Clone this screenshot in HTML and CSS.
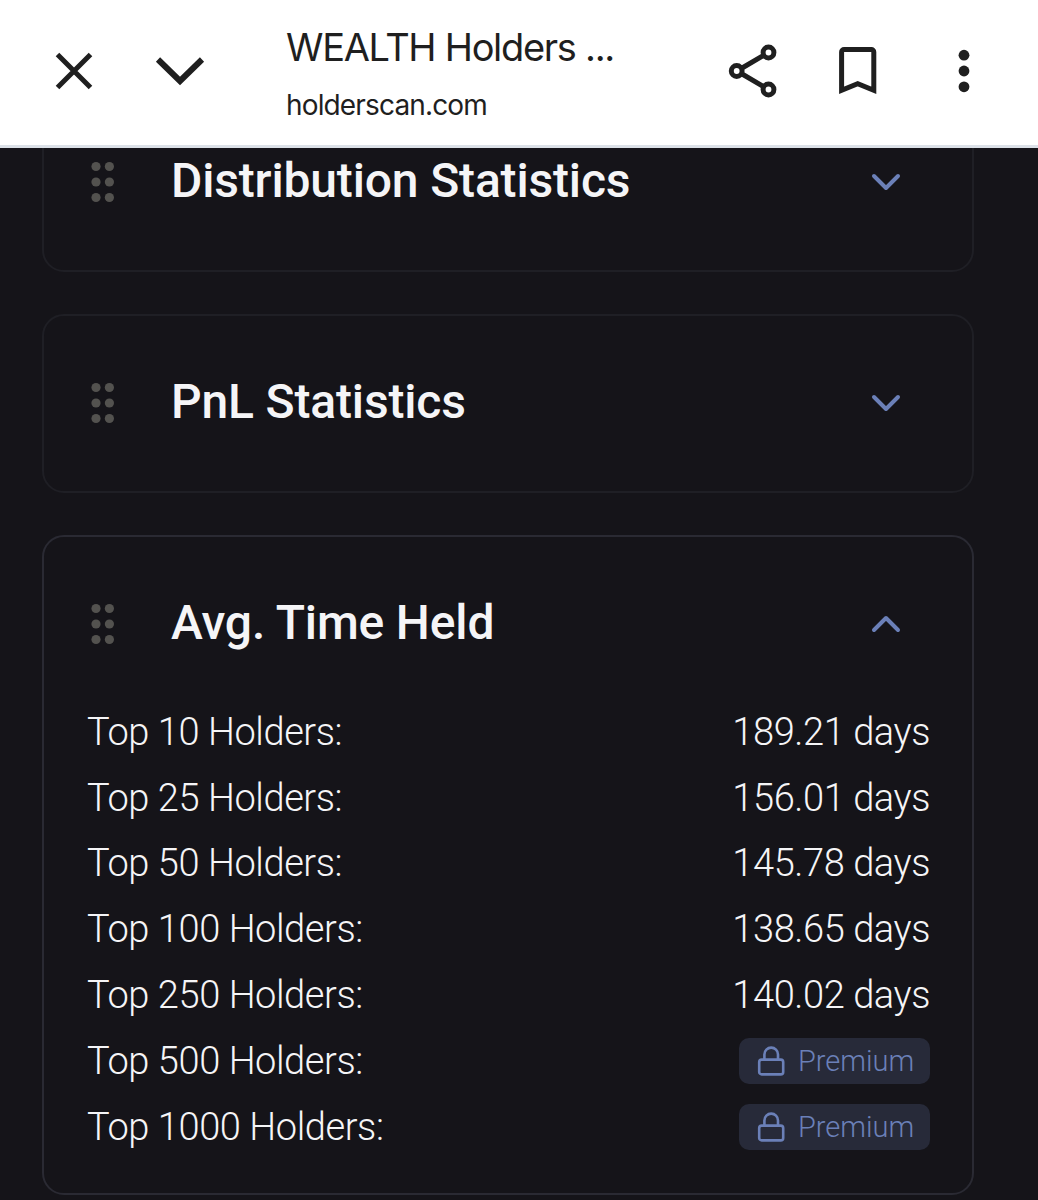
FILE: index.html
```html
<!DOCTYPE html>
<html lang="en">
<head>
    <meta charset="UTF-8">
    <meta name="viewport" content="width=device-width, initial-scale=1.0">
    <title>WEALTH Holders</title>
    <link rel="stylesheet" href="styles.css">
</head>
<body>

<!-- Shared icons -->
<svg class="icon-defs" width="0" height="0">
    <symbol id="grip" viewBox="0 0 24 42">
        <circle cx="5" cy="5.5" r="4.6"/><circle cx="18.4" cy="5.5" r="4.6"/>
        <circle cx="5" cy="21" r="4.6"/><circle cx="18.4" cy="21" r="4.6"/>
        <circle cx="5" cy="36.5" r="4.6"/><circle cx="18.4" cy="36.5" r="4.6"/>
    </symbol>
    <symbol id="chevron" viewBox="0 0 32 20">
        <path d="M4 4L16 16L28 4"/>
    </symbol>
    <symbol id="lock" viewBox="0 0 28 30">
        <rect x="2.2" y="13.6" width="24" height="14.8" rx="2.5"/>
        <path d="M7.4 13.6V8.4a6.8 6.8 0 0 1 13.6 0v5.2"/>
    </symbol>
</svg>

<header class="toolbar">
    <svg class="tool close" viewBox="0 0 40 40"><path d="M3.5 3.5L36.5 36.5M36.5 3.5L3.5 36.5"/></svg>
    <svg class="tool collapse" viewBox="0 0 50 30"><path d="M3 3.5L25 25L47 3.5"/></svg>
    <div class="page-info">
        <div class="page-title">WEALTH Holders ...</div>
        <div class="page-url">holderscan.com</div>
    </div>
    <svg class="tool share" viewBox="0 0 50 54">
        <path d="M9 27L40.5 8.5M9 27L40.5 45.5"/>
        <circle cx="8.7" cy="27" r="5.4"/><circle cx="40.5" cy="8.5" r="5.4"/><circle cx="40.5" cy="45.5" r="5.4"/>
    </svg>
    <svg class="tool bookmark" viewBox="0 0 38 48"><path d="M2.6 43.2V5.1a2.5 2.5 0 0 1 2.5-2.5H32.3a2.5 2.5 0 0 1 2.5 2.5V43.2L18.7 36.6Z"/></svg>
    <svg class="tool more" viewBox="0 0 12 44"><circle cx="6" cy="6.2" r="5.4"/><circle cx="6" cy="22" r="5.4"/><circle cx="6" cy="37.8" r="5.4"/></svg>
</header>

<main class="content">
    <section class="card">
        <div class="card-header">
            <svg class="grip"><use href="#grip"/></svg>
            <h2>Distribution Statistics</h2>
            <svg class="chevron"><use href="#chevron"/></svg>
        </div>
    </section>

    <section class="card">
        <div class="card-header">
            <svg class="grip"><use href="#grip"/></svg>
            <h2>PnL Statistics</h2>
            <svg class="chevron"><use href="#chevron"/></svg>
        </div>
    </section>

    <section class="card open">
        <div class="card-header">
            <svg class="grip"><use href="#grip"/></svg>
            <h2>Avg. Time Held</h2>
            <svg class="chevron up"><use href="#chevron"/></svg>
        </div>
        <div class="rows">
            <div class="row"><span>Top 10 Holders:</span><span>189.21 days</span></div>
            <div class="row"><span>Top 25 Holders:</span><span>156.01 days</span></div>
            <div class="row"><span>Top 50 Holders:</span><span>145.78 days</span></div>
            <div class="row"><span>Top 100 Holders:</span><span>138.65 days</span></div>
            <div class="row"><span>Top 250 Holders:</span><span>140.02 days</span></div>
            <div class="row">
                <span>Top 500 Holders:</span>
                <span class="premium"><svg class="lock"><use href="#lock"/></svg>Premium</span>
            </div>
            <div class="row">
                <span>Top 1000 Holders:</span>
                <span class="premium"><svg class="lock"><use href="#lock"/></svg>Premium</span>
            </div>
        </div>
    </section>
</main>

</body>
</html>
```

FILE: styles.css
```css
* {
    box-sizing: border-box;
}

body {
    margin: 0;
    height: 1200px;
    overflow: hidden;
    display: flex;
    flex-direction: column;
    background-color: #151419;
    color: #f5f5f7;
    font-family: Roboto, sans-serif;
}

.icon-defs {
    display: none;
}

/* Browser toolbar */
.toolbar {
    flex: none;
    height: 148px;
    display: flex;
    align-items: center;
    padding: 0 68px 3px 54px;
    background-color: #fff;
    border-bottom: 3px solid #dce1e8;
    color: #1f1f1f;
}

.tool {
    flex: none;
    fill: none;
    stroke: #1f1f1f;
    stroke-width: 5;
}

.close {
    width: 40px;
    height: 40px;
}

.collapse {
    width: 50px;
    height: 30px;
    margin-left: 61px;
    stroke-width: 6;
}

.page-info {
    flex: 1;
    margin-left: 81px;
    padding-top: 9px;
    font-family: Inter, sans-serif;
    white-space: nowrap;
}

.page-title {
    font-size: 38px;
    font-weight: 400;
    line-height: 58px;
    letter-spacing: -1.3px;
}

.page-url {
    font-size: 28px;
    font-weight: 400;
    line-height: 58px;
    letter-spacing: -0.85px;
}

.share {
    width: 50px;
    height: 54px;
}

.share circle {
    fill: #fff;
}

.bookmark {
    width: 38px;
    height: 48px;
    margin-left: 61px;
}

.more {
    width: 12px;
    height: 44px;
    margin-left: 81px;
    fill: #1f1f1f;
    stroke: none;
}

/* Cards */
.content {
    flex: 1;
    min-height: 0;
    overflow: hidden;
    display: flex;
    flex-direction: column;
    justify-content: flex-end;
    gap: 42px;
    padding: 0 64px 5px 42px;
}

.card {
    flex: none;
    padding: 0 42px 0 43px;
    border: 2px solid #1f1f25;
    border-radius: 22px;
}

.card.open {
    height: 660px;
    border-color: #2a2a33;
}

.card-header {
    height: 175px;
    display: flex;
    align-items: center;
    padding: 0 28px 1px 4px;
}

.card-header h2 {
    flex: 1;
    margin: 0 0 3px 56px;
    font-size: 48px;
    font-weight: 500;
    line-height: 56px;
    letter-spacing: -0.16px;
}

.grip {
    width: 24px;
    height: 42px;
    fill: #53524f;
}

.chevron {
    width: 32px;
    height: 20px;
    fill: none;
    stroke: #6b80b8;
    stroke-width: 4;
    stroke-linecap: round;
    stroke-linejoin: round;
}

.chevron.up {
    transform: rotate(180deg);
}

.rows {
    margin-top: -13px;
}

.row {
    height: 65.8px;
    display: flex;
    justify-content: space-between;
    align-items: center;
    font-size: 38px;
    font-weight: 300;
    letter-spacing: -0.42px;
}

.premium {
    width: 191px;
    height: 46px;
    display: flex;
    align-items: center;
    gap: 13px;
    padding-left: 18px;
    border-radius: 10px;
    background-color: #272a39;
    color: #6b80b8;
    font-size: 29px;
    letter-spacing: 0;
}

.lock {
    width: 28px;
    height: 30px;
    fill: none;
    stroke: #6b80b8;
    stroke-width: 2.6;
}
```
